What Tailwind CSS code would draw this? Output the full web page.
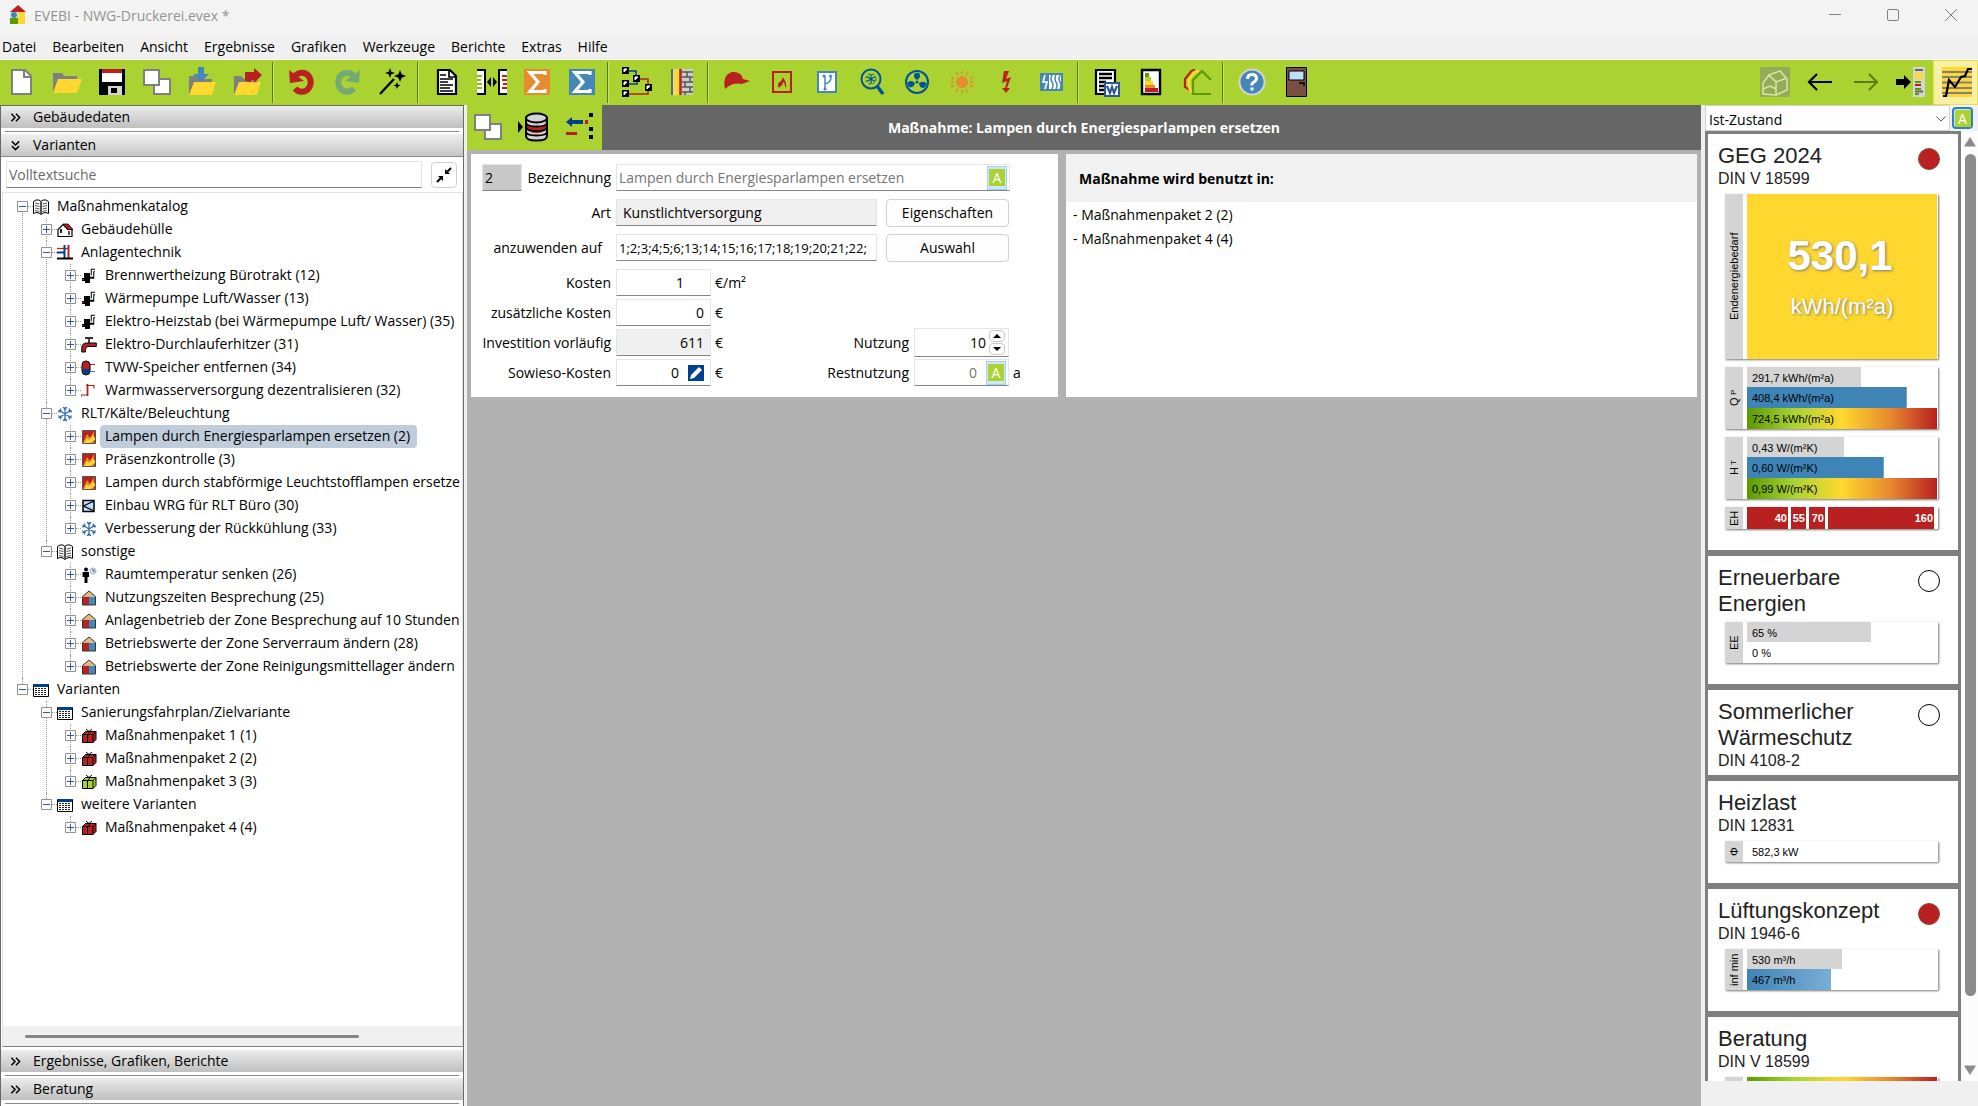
<!DOCTYPE html>
<html lang="de">

<head>
    <meta charset="UTF-8" />
    <meta name="viewport" content="width=device-width, initial-scale=1.0" />
    <title>EVEBI - NWG-Druckerei.evex</title>
    <script src="https://cdn.jsdelivr.net/npm/@tailwindcss/browser@4"></script>
</head>

<body class="h-screen flex flex-col overflow-hidden bg-[#f0f0f0] text-black text-[14px] leading-5 font-['Open_Sans','Noto_Sans',sans-serif]">

    <!-- icon definitions -->
    <svg class="hidden">
        <symbol id="i-copy" viewBox="0 0 30 30">
            <path d="M12 12h16v15H12z" fill="#fff" stroke="#808080" stroke-width="2" />
            <path d="M2 3h15v15H2z" fill="#fff" stroke="#808080" stroke-width="2" />
        </symbol>
        <symbol id="i-folder" viewBox="0 0 30 30">
            <path d="M1 26V6h9l2 3h13v7H6z" fill="#808080" />
            <path d="M6 12h24l-5 14H1z" fill="#ffd82f" />
        </symbol>
        <symbol id="i-book" viewBox="0 0 16 16">
            <path d="M.5 14.500V2.500L3 1l3 0 2 1.500L10 1l3 0 2.500 1.500v12L13 13.500l-3 .5-2 1.500L6 14l-3-.5z" fill="#fff" stroke="#000" />
            <path d="M2 4l4.500 1M2 6.500l4.500 1M2 9l4.500 1M2 11.500l4.500 1M14 4l-4.500 1M14 6.500l-4.500 1M14 9l-4.500 1M14 11.500l-4.500 1" stroke="#555" />
            <path d="M8 2v13" stroke="#555" stroke-width="2" />
        </symbol>
        <symbol id="i-house" viewBox="0 0 16 16">
            <path d="M1 14.500V7.500L6 2.500l5 5v7z" fill="#fff" stroke="#000" stroke-width="1.200" />
            <path d="M10 7.500h5v7h-5" fill="#fff" stroke="#000" stroke-width="1.200" />
            <path d="M6 2h5l5 5.500h-5z" fill="#b92020" stroke="#000" stroke-width=".8" />
            <path d="M3 7h2v4H3z" fill="#222" />
            <path d="M11 9h2v4h-2z" fill="#7a4a3a" />
        </symbol>
        <symbol id="i-tech" viewBox="0 0 16 16">
            <path d="M0 3.500h11" stroke="#b92020" stroke-width="1.300" />
            <path d="M0 7.500h8M7.500 0v14" stroke="#003f8c" stroke-width="2" />
            <path d="M11.500 0v14" stroke="#b92020" stroke-width="2" />
            <path d="M0 13.500h16" stroke="#000" stroke-width="2" />
        </symbol>
        <symbol id="i-boiler" viewBox="0 0 16 16">
            <path d="M3 5h6v10H4v-2H1v-3h2z" />
            <path d="M9 9h2.500V2.500H14" fill="none" stroke="#000" stroke-width="3.500" />
            <path d="M9 8h2.500V2.500H15" fill="none" stroke="#fff" stroke-width="1.500" />
            <path d="M1 11h2v1H1z" fill="#b92020" />
        </symbol>
        <symbol id="i-tap" viewBox="0 0 16 16">
            <path d="M4 1h8M8 1v5" stroke="#333" stroke-width="1.800" />
            <path d="M.8 15v-4q0-5 5-5h9.500v3.500H7q-2.500 0-2.500 3V15z" fill="#b92020" stroke="#000" />
        </symbol>
        <symbol id="i-tank" viewBox="0 0 16 16">
            <path d="M9 11.500h5" stroke="#4587b8" />
            <path d="M9 4.500h5" stroke="#b92020" />
            <rect x="1" y="1" width="8" height="14" rx="4" fill="#b92020" stroke="#000" />
            <path d="M1.500 9h7v2a3.500 3.500 0 0 1-7 0z" fill="#003f8c" />
        </symbol>
        <symbol id="i-pipe" viewBox="0 0 16 16">
            <path d="M0 14v-2h6M5 2.500h8v3" fill="none" stroke="#b92020" stroke-width="1.200" />
            <path d="M6.500 1v12" stroke="#b92020" stroke-width="1.800" />
        </symbol>
        <symbol id="i-snow" viewBox="0 0 16 16">
            <path d="M8 1v14M1.500 4l13 8M14.500 4l-13 8M6 1l2 2.500L10 1M6 15l2-2.500 2 2.500M1 6l3-.5L3.500 2.500M15 6l-3-.5.5-3M1 10l3 .5-.5 3M15 10l-3 .5.5 3" fill="none" stroke="#2c66ad" stroke-width="1.200" />
        </symbol>
        <symbol id="i-lamp" viewBox="0 0 16 16">
            <path d="M1.500 1.500h13v13h-13z" fill="#b92020" stroke="#555" />
            <path d="M2 14L6 5l3 4 4-7v12z" fill="#f0832b" />
            <path d="M3 14l3-5 2 2 4-5 2 3v2l-5 3z" fill="#ffd82f" />
        </symbol>
        <symbol id="i-wrg" viewBox="0 0 16 16">
            <path d="M2 2.500h11v11H2z" fill="#bfe0fb" stroke="#000" stroke-width="1.500" />
            <path d="M13 3L2.500 8 13 13" fill="none" stroke="#000" stroke-width="1.300" />
        </symbol>
        <symbol id="i-person" viewBox="0 0 16 16">
            <circle cx="5" cy="2.500" r="2" />
            <path d="M1.500 5h6.500v5H6.500v6h-3v-6h-2z" />
            <circle cx="12" cy="4" r="3" fill="#cfe4f5" stroke="#7796b0" stroke-dasharray="2 1" />
            <path d="M12 2v2h2" fill="none" stroke="#556" />
        </symbol>
        <symbol id="i-zone" viewBox="0 0 16 16">
            <path d="M1.500 6.500V15H8V6.500z" fill="#b92020" />
            <path d="M8 6.500V15h6.500V6.500z" fill="#4587b8" />
            <path d="M1.500 6.500L8 1l6.500 5.500z" fill="#e0bd78" />
            <path d="M1.500 6.500L8 1l6.500 5.500V15h-13z" fill="none" stroke="#333" />
        </symbol>
        <symbol id="i-table" viewBox="0 0 16 16">
            <path d="M.5 2.500h15v12H.5z" fill="#fff" stroke="#000" />
            <path d="M1 2h14v3H1z" fill="#003f8c" />
            <path d="M2 6.500h12M2 8.500h12M2 10.500h12M2 12.500h12" stroke="#222" stroke-dasharray="2 1" />
        </symbol>
        <symbol id="i-pack" viewBox="0 0 16 16">
            <path d="M1.500 6.500l3-3h10.500v8l-3 3H1.500z" fill="currentColor" stroke="#000" />
            <path d="M1.500 6.500H12v8M12 6.500l3-3M6.500 14.500v-8l3-3M5 1l3 2.500L11 1" fill="none" stroke="#000" />
        </symbol>
        <symbol id="i-plus" viewBox="0 0 11 11">
            <path d="M.5.5h10v10H.5z" fill="#fdfdfd" stroke="#919191" />
            <path d="M2 5.500h7M5.500 2v7" stroke="#3a5795" />
        </symbol>
        <symbol id="i-minus" viewBox="0 0 11 11">
            <path d="M.5.5h10v10H.5z" fill="#fdfdfd" stroke="#919191" />
            <path d="M2 5.500h7" stroke="#3a5795" />
        </symbol>
        <symbol id="i-chev" viewBox="0 0 12 12">
            <path d="M1.500 2l4 4-4 4M6.500 2l4 4-4 4" fill="none" stroke="#000" stroke-width="1.600" />
        </symbol>
    </svg>

    <!-- title bar -->
    <header class="h-[34px] shrink-0 flex items-center bg-[#f3f3f3] text-[#929292]">
        <svg class="w-[18px] h-5 ml-[9px] mb-1" viewBox="0 0 18 20">
            <path d="M1 7L9 0l8 7z" fill="#b92020" />
            <path d="M1 7h8v6H1z" fill="#d3e6f5" />
            <circle cx="5" cy="10" r="3" fill="#4587b8" />
            <path d="M1 13h8v6H1z" fill="#5b9a00" />
            <path d="M9 7h7v12H9z" fill="#ffd82f" />
        </svg>
        <h1 class="ml-[7px] mb-[3px]">EVEBI - NWG-Druckerei.evex *</h1>
        <div class="ml-auto mb-1 flex">
            <button class="w-[58px] h-[30px] flex items-center justify-center" aria-label="Minimieren"><svg class="size-3" viewBox="0 0 12 12"><path d="M0 5.500h12" stroke="#808080" /></svg></button>
            <button class="w-[58px] h-[30px] flex items-center justify-center" aria-label="Maximieren"><svg class="size-3" viewBox="0 0 12 12"><rect x=".5" y=".5" width="11" height="11" rx="1.500" fill="none" stroke="#808080" /></svg></button>
            <button class="w-[58px] h-[30px] flex items-center justify-center mr-[-2px]" aria-label="Schließen"><svg class="size-3" viewBox="0 0 12 12"><path d="M0 0l12 12M12 0L0 12" stroke="#808080" /></svg></button>
        </div>
    </header>

    <!-- menu -->
    <nav class="h-[26px] shrink-0 flex items-center gap-4 pl-[2px] border-b border-white">
        <button>Datei</button>
        <button>Bearbeiten</button>
        <button>Ansicht</button>
        <button>Ergebnisse</button>
        <button>Grafiken</button>
        <button>Werkzeuge</button>
        <button>Berichte</button>
        <button>Extras</button>
        <button>Hilfe</button>
    </nav>

    <!-- toolbar -->
    <div class="h-[45px] shrink-0 flex items-center bg-[#aad332] [&>button]:w-[45px] [&>button]:h-full [&>button]:flex [&>button]:items-center [&>button]:justify-center [&>button]:pr-px [&>button]:pb-px [&_svg]:size-[30px] [&>hr]:w-[2px] [&>hr]:h-[41px] [&>hr]:ml-[2px] [&>hr]:mr-[6px] [&>hr]:border-0 [&>hr]:border-l [&>hr]:border-[#5d7a10] [&>hr]:bg-[#c6e36b]">
        <button aria-label="Neu"><svg viewBox="0 0 30 30"><path d="M5 3h13l6 6v18H5z" fill="#fff" stroke="#808080" stroke-width="2" /><path d="M17 3v7h7" fill="none" stroke="#808080" stroke-width="2" /></svg></button>
        <button aria-label="Öffnen"><svg><use href="#i-folder" /></svg></button>
        <button aria-label="Speichern"><svg viewBox="0 0 30 30"><path d="M2 2h26v26H2z" /><path d="M5 2h20v4H5z" fill="#b92020" /><path d="M5 6h20v9H5z" fill="#fff" /><path d="M11 19h14v9H11z" fill="#d4d4d4" /><path d="M14 21h6v5h-6z" /></svg></button>
        <button aria-label="Kopieren"><svg><use href="#i-copy" /></svg></button>
        <button aria-label="Importieren"><svg viewBox="0 0 30 30"><path d="M2 28V9h7l3 3h13v6z" fill="#808080" /><path d="M7 15h22l-4 13H2z" fill="#ffd82f" /><path d="M11 0h6v7h5l-8 8-8-8h5z" fill="#4587b8" /></svg></button>
        <button aria-label="Exportieren"><svg viewBox="0 0 30 30"><path d="M2 28V9h7l3 3h13v6z" fill="#808080" /><path d="M7 15h22l-4 13H2z" fill="#ffd82f" /><path d="M13 14V5h9V1l8 7-8 8v-3h-3v2z" fill="#b92020" /></svg></button>
        <hr>
        <button aria-label="Rückgängig"><svg viewBox="0 0 30 30"><path d="M8 9q4-4 9-3a9 9.500 0 1 1-9 15.500" fill="none" stroke="#b92020" stroke-width="6" /><path d="M2 3l1 13 14-2z" fill="#b92020" /></svg></button>
        <button aria-label="Wiederholen"><svg viewBox="0 0 30 30"><path d="M22 9q-4-4-9-3a9 9.500 0 1 0 9 15.500" fill="none" stroke="#74ab72" stroke-width="6" /><path d="M28 3l-1 13-14-2z" fill="#74ab72" /></svg></button>
        <button aria-label="Assistent"><svg viewBox="0 0 30 30"><path d="M3 27L17 12" stroke="#000" stroke-width="2.400" /><path d="M13 1l1.300 3.700L18 6l-3.700 1.300L13 11l-1.300-3.700L8 6l3.700-1.300zM23 3l1.700 4.300L29 9l-4.300 1.700L23 15l-1.700-4.300L17 9l4.300-1.700zM20 15l1 2.500 2.500 1-2.500 1-1 2.500-1-2.500-2.500-1 2.500-1z" /></svg></button>
        <hr>
        <button aria-label="Bericht"><svg viewBox="0 0 30 30"><path d="M6 3h12l6 6v18H6z" fill="#fff" stroke="#000" stroke-width="2.200" /><path d="M17 3v7h7M8 8h6M8 12h13M8 15h8M8 18h13M8 21h10M8 24h13" fill="none" stroke="#000" stroke-width="1.700" /></svg></button>
        <button aria-label="Vergleichen"><svg viewBox="0 0 30 30"><path d="M0 2h9v26H0M30 2h-9v26h9" fill="#fff" /><path d="M0 3h8v24H0M30 3h-8v24h8" fill="none" stroke="#000" stroke-width="2" /><path d="M0 9h5M0 13h4M0 17h5M0 21h5" stroke="#8cba20" stroke-width="2" /><path d="M25 9h5M25 13h5M26 17h4M25 21h5" stroke="#b92020" stroke-width="2" /><path d="M14 10v10l-4-5zM16 10v10l4-5z" /></svg></button>
        <button aria-label="Summe"><svg viewBox="0 0 30 30"><path d="M2 2h26v26H2z" fill="#e88a2e" /><path d="M23 8V5.500H8L16 15 8 24.500h15V22" fill="none" stroke="#fff" stroke-width="3.200" /></svg></button>
        <button aria-label="Gesamtsumme"><svg viewBox="0 0 30 30"><path d="M2 2h26v26H2z" fill="#4587b8" /><path d="M23 8V5.500H8L16 15 8 24.500h15V22" fill="none" stroke="#fff" stroke-width="3.200" /></svg></button>
        <hr>
        <button aria-label="Struktur"><svg viewBox="0 0 30 30"><path d="M5 4h9v7M5 17h10v-5" fill="none" stroke="#003f8c" stroke-width="1.500" /><path d="M17 12h9v8M5 27h21v-8" fill="none" stroke="#b92020" stroke-width="1.500" /><path d="M0 0h7v7H0zM11 8h7v7h-7zM0 13h7v7H0zM23 17h7v7h-7zM0 23h7v7H0z" /><path d="M2 2h3L2 5zM13 10h3l-3 3zM2 15h3l-3 3zM25 19h3l-3 3zM2 25h3l-3 3z" fill="#fff" stroke="#fff" /></svg></button>
        <button aria-label="Bauteile"><svg viewBox="0 0 30 30"><path d="M4 2h22v26H4z" fill="#ccc" /><path d="M5 2v26" stroke="#666" stroke-width="2" /><path d="M6 2h7v26H6z" fill="#d8dfa0" /><path d="M7 4q7 0 4 2t-4 2q7 0 4 2t-4 2q7 0 4 2t-4 2q7 0 4 2t-4 2q7 0 4 2t-4 2q7 0 4 2t-4 2" fill="none" stroke="#ffd82f" stroke-width="2.500" /><path d="M13.500 2v26" stroke="#b92020" stroke-width="2.500" /><path d="M15 5h11M15 10h11M15 15h11M15 20h11M15 25h11M20 5v5M23 10v5M18 15v5M23 20v5M18 25v3" stroke="#555" stroke-width="1.500" /></svg></button>
        <hr>
        <button aria-label="Energieberater"><svg viewBox="0 0 30 30"><path d="M3 22Q0 8 10 5q9-1 11 7l7 2-8 3q-9-2-17 5z" fill="#b92020" /></svg></button>
        <button aria-label="Heizung"><svg viewBox="0 0 30 30"><path d="M6 5h18v20H6z" fill="none" stroke="#b92020" stroke-width="2" /><path d="M12 21q-3-4 2-7 2-2 1-4 5 4 4 11l-1-2q0-3-2-4 0 3-2 4-2 1-2 2z" fill="#b92020" /></svg></button>
        <button aria-label="Trinkwasser"><svg viewBox="0 0 30 30"><path d="M6 5h18v20H6z" fill="#fff" stroke="#4587b8" stroke-width="2" /><path d="M13 9v12M13 17q6-1 6-7" fill="none" stroke="#4587b8" stroke-width="1.500" /><circle cx="12" cy="9" r="1.500" fill="#4587b8" /><circle cx="18.500" cy="9" r="1.500" fill="#4587b8" /><circle cx="13" cy="22" r="1.500" fill="#4587b8" /></svg></button>
        <button aria-label="Kühlung"><svg viewBox="0 0 30 30"><circle cx="14" cy="12" r="9.500" fill="none" stroke="#00539c" stroke-width="2" /><path d="M20 19l6 8" stroke="#00539c" stroke-width="3.500" /><path d="M14 7v10M10 9.500l8 5M18 9.500l-8 5" fill="none" stroke="#00539c" stroke-width="1.200" /><circle cx="14" cy="12" r="5" fill="none" stroke="#00539c" stroke-dasharray="2 2" /></svg></button>
        <button aria-label="Lüftung"><svg viewBox="0 0 30 30"><circle cx="15" cy="15" r="11" fill="none" stroke="#00539c" stroke-width="2" /><path d="M15 13q-5-3-2-7h4q3 4-2 7zM13 16q-1 5-6 4l-2-4q4-4 8 0zM17 16q5-3 8 1l-3 4q-5 0-5-5z" fill="#00539c" /><circle cx="15" cy="15" r="1.500" fill="#00539c" /></svg></button>
        <button aria-label="Solar"><svg viewBox="0 0 30 30"><circle cx="15" cy="15" r="6" fill="#e88a2e" /><path d="M15 4v3M15 23v3M4 15h3M23 15h3M9 5l2 3M21 5l-2 3M9 25l2-3M21 25l-2-3M4 10l3 2M26 10l-3 2M4 20l3-2M26 20l-3-2" stroke="#e88a2e" stroke-width="1.600" /></svg></button>
        <button aria-label="Strom"><svg viewBox="0 0 30 30"><path d="M12 4h5l-3 8 5-2-4 11h3l-4 5-4-5h3l2-7-5 2z" fill="#b92020" /></svg></button>
        <button aria-label="Heizkörper"><svg viewBox="0 0 30 30"><path d="M3 6h23v18H3z" fill="#4587b8" /><path d="M12 8h12v14H12z" fill="#fff" /><path d="M15 8q-2 4 0 7t0 7M19 8q-2 4 0 7t0 7M23 8q-2 4 0 7t0 7" fill="none" stroke="#4587b8" stroke-width="1.500" /><path d="M8 8l-2 7h4l-2 7" fill="none" stroke="#fff" stroke-width="1.700" /></svg></button>
        <hr>
        <button aria-label="Word-Bericht"><svg viewBox="0 0 30 30"><path d="M4 3h19v24H4z" fill="#fff" stroke="#000" stroke-width="2.200" /><path d="M7 7h13M7 11h13M7 15h7M7 19h5M7 23h5" stroke="#000" stroke-width="2.400" /><path d="M13 16h14v13H13z" fill="#fff" stroke="#2b579a" stroke-width="2" /><path d="M15 19l3 7 2-6 2 6 3-7" fill="none" stroke="#2b579a" stroke-width="2.200" /></svg></button>
        <button aria-label="Energieausweis"><svg viewBox="0 0 30 30"><path d="M5 3h18v24H5z" fill="#fff" stroke="#000" stroke-width="2.400" /><path d="M8 6h4v4H8z" fill="#5b9a00" /><path d="M8 10h6v4H8z" fill="#aad332" /><path d="M8 14h8v4H8z" fill="#ffd82f" /><path d="M8 18h10v3H8z" fill="#e88a2e" /><path d="M8 21h13v4H8z" fill="#b92020" /></svg></button>
        <button aria-label="Sanierungsfahrplan"><svg viewBox="0 0 30 30"><path d="M13 3q-4 0-5 3l-5 6v8l5 3" fill="none" stroke="#b92020" stroke-width="2.200" /><path d="M17 4q-4 0-6 3L7 13v7l2 5" fill="none" stroke="#ffd82f" stroke-width="2.500" /><path d="M29 13l-9-9-9 9v14h18" fill="none" stroke="#5b9a00" stroke-width="2.200" /></svg></button>
        <hr>
        <button aria-label="Hilfe"><svg viewBox="0 0 30 30"><circle cx="15" cy="15" r="12.500" fill="#4587b8" stroke="#d4d4d4" stroke-width="2" /><path d="M10.500 12q0-4.500 4.500-4.500t4.500 4q0 2-2.500 3.500t-2 3.500" fill="none" stroke="#fff" stroke-width="3" /><path d="M13.500 20.500h3v3h-3z" fill="#fff" /></svg></button>
        <button aria-label="Beenden"><svg viewBox="0 0 30 30"><path d="M4.500.5h20v29h-20z" fill="#79503f" stroke="#000" /><path d="M7 4h15v9H7z" fill="#bfe0fb" stroke="#000" /><path d="M17 16h5v3" fill="none" stroke="#000" stroke-width="1.500" /></svg></button>

        <button class="ml-auto" aria-label="3D-Ansicht"><svg viewBox="0 0 30 30"><path d="M0 0h30v30H0z" fill="#94ab58" /><path d="M3 27V16l6-8 7 7v13zM9 8l11-4 7 8v11l-11 5M16 15l11-4M3 22l7-3 6 3" fill="none" stroke="#d7e7a4" stroke-width="1.500" /></svg></button>
        <button aria-label="Zurück"><svg viewBox="0 0 30 30"><path d="M27 15H4M12 7l-8 8 8 8" fill="none" stroke="#000" stroke-width="2.200" /></svg></button>
        <button aria-label="Vor"><svg viewBox="0 0 30 30"><path d="M4 15h23M19 7l8 8-8 8" fill="none" stroke="#5d7a10" stroke-width="2" /></svg></button>
        <button aria-label="Seitenleiste"><svg viewBox="0 0 30 30"><path d="M1 12h8V8l7 7-7 7v-4H1z" /><path d="M18 0h12v30H18z" fill="#d4d4d4" /><path d="M20 2h8v2h-8z" fill="#666" /><path d="M20 6h8v6h-8z" fill="#ffd82f" /><path d="M20 15h6M20 22h6M20 27h4" stroke="#5b9a00" stroke-width="2" /><path d="M20 18h6" stroke="#b92020" stroke-width="2" /><path d="M20 24.500h8" stroke="#666" stroke-width="2" /></svg></button>
        <button class="pl-[3px] bg-[#f8f0a4] border border-[#f3dd3e]" aria-label="Diagramm"><svg viewBox="0 0 30 30"><path d="M0 0h30v30H0z" fill="#ffd82f" /><path d="M0 5h30M0 10h30M0 15.500h30M0 21h30M0 26h30" stroke="#808080" stroke-width="2" /><path d="M1 29h3L7 13l6 7 6-10 4-1 3-7h4" fill="none" stroke="#000" stroke-width="2.200" /></svg></button>
    </div>

    <main class="flex-1 min-h-0 flex">

        <!-- navigation -->
        <aside class="w-[464px] shrink-0 flex flex-col bg-white border-l border-t border-r border-[#6a6a6a]">
            <button class="h-[22px] flex items-center gap-3 pl-[9px] bg-linear-to-b from-[#ececec] to-[#bfbfbf]"><svg class="size-[11px]"><use href="#i-chev" /></svg>Gebäudedaten</button>
            <hr class="mx-1 my-[3px] border-[#8c8c8c]">
            <button class="h-[23px] flex items-center gap-3 pl-[9px] mt-[-1px] border-b border-[#8c8c8c] bg-linear-to-b from-[#f0f0f0] to-[#c6c6c6]"><svg class="size-[11px] rotate-90"><use href="#i-chev" /></svg>Varianten</button>
            <div class="flex items-center gap-[9px] h-[35px] pl-[5px] pr-[6px]">
                <input type="text" aria-label="Volltextsuche" placeholder="Volltextsuche" class="flex-1 h-[27px] pl-[2px] border border-[#e2e2e2] border-b-[#808080] placeholder:text-[#6a6a6a]">
                <button class="w-[26px] h-[26px] rounded border border-[#d0d0d0] flex items-center justify-center" aria-label="Einklappen"><svg class="size-4" viewBox="0 0 16 16"><path d="M1 15l4-4M15 1l-4 4" stroke="#000" stroke-width="2" /><path d="M2 9h5v5zM9 2l5 5H9z" /></svg></button>
            </div>
            <div class="flex-1 min-h-0 flex flex-col border border-[#e2e2e2] border-b-[#808080] ml-px">
                <ul class="flex-1 min-h-0 overflow-hidden whitespace-nowrap pl-[14px] pt-[2px] mr-[2px] [&_ul]:pl-6 [&_li]:relative [&_li]:before:absolute [&_li]:before:left-[5px] [&_li]:before:top-0 [&_li]:before:bottom-0 [&_li]:before:border-l [&_li]:before:border-dotted [&_li]:before:border-[#999] [&_li:last-child]:before:bottom-auto [&_li:last-child]:before:h-3 [&_p]:relative [&_p]:h-[23px] [&_p]:flex [&_p]:items-center [&_svg]:shrink-0 [&_p>svg:first-child]:size-[11px] [&_p>svg:last-of-type]:size-4 [&_i]:shrink-0 [&_i]:w-[5px] [&_i]:border-t [&_i]:border-dotted [&_i]:border-[#999] [&_span]:pl-[5px] [&_span]:ml-[3px] [&_span]:pr-[7px] [&_span]:h-[23px] [&_span]:leading-[22px] [&_span]:rounded">
                    <li class="before:mt-3">
                        <p><svg><use href="#i-minus" /></svg><i></i><svg><use href="#i-book" /></svg><span>Maßnahmenkatalog</span></p>
                        <ul>
                            <li>
                                <p><svg><use href="#i-plus" /></svg><i></i><svg><use href="#i-house" /></svg><span>Gebäudehülle</span></p>
                            </li>
                            <li>
                                <p><svg><use href="#i-minus" /></svg><i></i><svg><use href="#i-tech" /></svg><span>Anlagentechnik</span></p>
                                <ul>
                                    <li><p><svg><use href="#i-plus" /></svg><i></i><svg><use href="#i-boiler" /></svg><span>Brennwertheizung Bürotrakt (12)</span></p></li>
                                    <li><p><svg><use href="#i-plus" /></svg><i></i><svg><use href="#i-boiler" /></svg><span>Wärmepumpe Luft/Wasser (13)</span></p></li>
                                    <li><p><svg><use href="#i-plus" /></svg><i></i><svg><use href="#i-boiler" /></svg><span>Elektro-Heizstab (bei Wärmepumpe Luft/ Wasser) (35)</span></p></li>
                                    <li><p><svg><use href="#i-plus" /></svg><i></i><svg><use href="#i-tap" /></svg><span>Elektro-Durchlauferhitzer (31)</span></p></li>
                                    <li><p><svg><use href="#i-plus" /></svg><i></i><svg><use href="#i-tank" /></svg><span>TWW-Speicher entfernen (34)</span></p></li>
                                    <li><p><svg><use href="#i-plus" /></svg><i></i><svg><use href="#i-pipe" /></svg><span>Warmwasserversorgung dezentralisieren (32)</span></p></li>
                                </ul>
                            </li>
                            <li>
                                <p><svg><use href="#i-minus" /></svg><i></i><svg><use href="#i-snow" /></svg><span>RLT/Kälte/Beleuchtung</span></p>
                                <ul>
                                    <li><p><svg><use href="#i-plus" /></svg><i></i><svg><use href="#i-lamp" /></svg><span class="bg-[#bfcddb]">Lampen durch Energiesparlampen ersetzen (2)</span></p></li>
                                    <li><p><svg><use href="#i-plus" /></svg><i></i><svg><use href="#i-lamp" /></svg><span>Präsenzkontrolle (3)</span></p></li>
                                    <li><p><svg><use href="#i-plus" /></svg><i></i><svg><use href="#i-lamp" /></svg><span>Lampen durch stabförmige Leuchtstofflampen ersetze</span></p></li>
                                    <li><p><svg><use href="#i-plus" /></svg><i></i><svg><use href="#i-wrg" /></svg><span>Einbau WRG für RLT Büro (30)</span></p></li>
                                    <li><p><svg><use href="#i-plus" /></svg><i></i><svg><use href="#i-snow" /></svg><span>Verbesserung der Rückkühlung (33)</span></p></li>
                                </ul>
                            </li>
                            <li>
                                <p><svg><use href="#i-minus" /></svg><i></i><svg><use href="#i-book" /></svg><span>sonstige</span></p>
                                <ul>
                                    <li><p><svg><use href="#i-plus" /></svg><i></i><svg><use href="#i-person" /></svg><span>Raumtemperatur senken (26)</span></p></li>
                                    <li><p><svg><use href="#i-plus" /></svg><i></i><svg><use href="#i-zone" /></svg><span>Nutzungszeiten Besprechung (25)</span></p></li>
                                    <li><p><svg><use href="#i-plus" /></svg><i></i><svg><use href="#i-zone" /></svg><span>Anlagenbetrieb der Zone Besprechung auf 10 Stunden</span></p></li>
                                    <li><p><svg><use href="#i-plus" /></svg><i></i><svg><use href="#i-zone" /></svg><span>Betriebswerte der Zone Serverraum ändern (28)</span></p></li>
                                    <li><p><svg><use href="#i-plus" /></svg><i></i><svg><use href="#i-zone" /></svg><span>Betriebswerte der Zone Reinigungsmittellager ändern</span></p></li>
                                </ul>
                            </li>
                        </ul>
                    </li>
                    <li>
                        <p><svg><use href="#i-minus" /></svg><i></i><svg><use href="#i-table" /></svg><span>Varianten</span></p>
                        <ul>
                            <li>
                                <p><svg><use href="#i-minus" /></svg><i></i><svg><use href="#i-table" /></svg><span>Sanierungsfahrplan/Zielvariante</span></p>
                                <ul>
                                    <li><p><svg><use href="#i-plus" /></svg><i></i><svg class="text-[#b92020]"><use href="#i-pack" /></svg><span>Maßnahmenpaket 1 (1)</span></p></li>
                                    <li><p><svg><use href="#i-plus" /></svg><i></i><svg class="text-[#b92020]"><use href="#i-pack" /></svg><span>Maßnahmenpaket 2 (2)</span></p></li>
                                    <li><p><svg><use href="#i-plus" /></svg><i></i><svg class="text-[#aad332]"><use href="#i-pack" /></svg><span>Maßnahmenpaket 3 (3)</span></p></li>
                                </ul>
                            </li>
                            <li>
                                <p><svg><use href="#i-minus" /></svg><i></i><svg><use href="#i-table" /></svg><span>weitere Varianten</span></p>
                                <ul>
                                    <li><p><svg><use href="#i-plus" /></svg><i></i><svg class="text-[#b92020]"><use href="#i-pack" /></svg><span>Maßnahmenpaket 4 (4)</span></p></li>
                                </ul>
                            </li>
                        </ul>
                    </li>
                </ul>
                <div class="h-5 shrink-0 flex items-center px-[22px] bg-[#f0f0f0]">
                    <div class="w-[334px] h-[3px] rounded-full bg-[#868686]"></div>
                </div>
            </div>
            <button class="h-[22px] shrink-0 mt-[3px] flex items-center gap-3 pl-[9px] bg-linear-to-b from-[#ececec] to-[#bfbfbf]"><svg class="size-[11px]"><use href="#i-chev" /></svg>Ergebnisse, Grafiken, Berichte</button>
            <hr class="mx-1 mt-[3px] mb-[2px] border-[#8c8c8c]">
            <button class="h-[22px] shrink-0 flex items-center gap-3 pl-[9px] bg-linear-to-b from-[#ececec] to-[#bfbfbf]"><svg class="size-[11px]"><use href="#i-chev" /></svg>Beratung</button>
            <hr class="mx-1 mt-[3px] mb-[2px] border-[#8c8c8c]">
        </aside>

        <!-- work area -->
        <section class="flex-1 min-w-0 ml-[3px] bg-[#b1b1b1]">
            <div class="h-[45px] flex bg-[#666]">
                <div class="flex bg-[#aad332] [&>button]:w-[45px] [&>button]:flex [&>button]:items-center [&>button]:justify-center [&>button]:pr-[4px] [&>button]:pb-px [&_svg]:size-[30px]">
                    <button aria-label="Kopieren"><svg><use href="#i-copy" /></svg></button>
                    <button aria-label="In Datenbank"><svg viewBox="0 0 30 30"><path d="M0 9v12l5-6z" /><path d="M8 6v18q0 4.500 10.500 4.500T29 24V6z" fill="#d4d4d4" stroke="#000" stroke-width="2" /><path d="M9 11q2 4 9.500 4t9.500-4v6q-2 4-9.500 4T9 17z" fill="#b92020" /><path d="M8 10.500q0 4 10.500 4t10.500-4M8 15q0 4 10.500 4T29 15M8 19.500q0 4 10.500 4t10.500-4" fill="none" stroke="#000" stroke-width="1.800" /><ellipse cx="18.500" cy="6" rx="10.500" ry="4.500" fill="#d4d4d4" stroke="#000" stroke-width="2" /></svg></button>
                    <button aria-label="Ersetzen"><svg viewBox="0 0 30 30"><path d="M3 10l6-5v3h11v4H9v3z" fill="#003f8c" /><path d="M22 8h3v4h-3zM3 20h11v3H3z" fill="#b92020" /><path d="M26 1h4v4h-4zM26 15h4v4h-4zM26 23h4v4h-4z" /></svg></button>
                </div>
                <h2 class="flex-1 -ml-[135px] self-center text-center text-white font-bold pointer-events-none">Maßnahme: Lampen durch Energiesparlampen ersetzen</h2>
            </div>

            <div class="flex gap-2 p-1 pb-0">
                <form class="w-[587px] h-[243px] bg-white pt-[10px] pl-[11px] flex flex-col gap-2">
                    <div class="flex items-center gap-[5px]">
                        <input type="text" value="2" aria-label="Nummer" readonly class="w-10 h-[27px] pl-[2px] bg-[#c8c8c8] border border-[#e5e5e5] border-b-[#868686]">
                        <label for="bezeichnung" class="w-[84px] text-right">Bezeichnung</label>
                        <div class="w-[394px] h-[27px] flex items-center border border-[#e5e5e5] border-b-[#868686]">
                            <input id="bezeichnung" type="text" value="Lampen durch Energiesparlampen ersetzen" class="flex-1 min-w-0 pl-[2px] text-[#757575]">
                            <button type="button" class="w-5 h-6 mr-[2px] flex items-center justify-center border border-[#9fd0f5] bg-[#cce8ff]"><span class="w-4 h-[17px] bg-[#aad332] text-white leading-[17px]">A</span></button>
                        </div>
                    </div>
                    <div class="flex items-center">
                        <label for="art" class="w-[129px] mr-[5px] text-right">Art</label>
                        <input id="art" type="text" value="Kunstlichtversorgung" readonly class="w-[261px] h-[27px] pl-[6px] bg-[#f0f0f0] border border-[#e5e5e5] border-b-[#868686]">
                        <button type="button" class="w-[123px] h-7 -my-px ml-[9px] rounded border border-[#d0d0d0] bg-[#fdfdfd]">Eigenschaften</button>
                    </div>
                    <div class="flex items-center">
                        <label for="auswahl" class="w-[120px] mr-[14px] text-right">anzuwenden auf</label>
                        <input id="auswahl" type="text" value="1;2;3;4;5;6;13;14;15;16;17;18;19;20;21;22;" class="w-[261px] h-[27px] pl-[2px] text-[13px] border border-[#e5e5e5] border-b-[#868686]">
                        <button type="button" class="w-[123px] h-7 -my-px ml-[9px] rounded border border-[#d0d0d0] bg-[#fdfdfd]">Auswahl</button>
                    </div>
                    <div class="flex flex-col gap-[3px]">
                        <div class="flex items-center">
                            <label for="kosten" class="w-[129px] mr-[5px] text-right">Kosten</label>
                            <input id="kosten" type="text" value="1" class="w-[95px] h-[27px] pr-[26px] text-right border border-[#e5e5e5] border-b-[#868686]">
                            <span class="ml-1">€/m²</span>
                        </div>
                        <div class="flex items-center">
                            <label for="zusatz" class="w-[129px] mr-[5px] text-right">zusätzliche Kosten</label>
                            <input id="zusatz" type="text" value="0" class="w-[95px] h-[27px] pr-[6px] text-right border border-[#e5e5e5] border-b-[#868686]">
                            <span class="ml-1">€</span>
                        </div>
                        <div class="flex items-center">
                            <label for="investition" class="w-[129px] mr-[5px] text-right whitespace-nowrap">Investition vorläufig</label>
                            <input id="investition" type="text" value="611" readonly class="w-[95px] h-[27px] pr-[6px] text-right bg-[#f0f0f0] border border-[#e5e5e5] border-b-[#868686]">
                            <span class="ml-1">€</span>
                            <label for="nutzung" class="ml-auto mr-[5px]">Nutzung</label>
                            <div class="w-[95px] h-[29px] -my-px mr-[49px] flex items-center border border-[#e5e5e5] border-b-[#868686]">
                                <input id="nutzung" type="text" value="10" class="flex-1 min-w-0 pr-[3px] text-right">
                                <div class="w-4 mr-[3px] flex flex-col gap-px">
                                    <button type="button" aria-label="Mehr" class="h-3 flex items-center justify-center rounded border border-[#c8c8c8]"><svg class="w-2 h-1" viewBox="0 0 8 4"><path d="M0 4l4-4 4 4z" /></svg></button>
                                    <button type="button" aria-label="Weniger" class="h-3 flex items-center justify-center rounded border border-[#c8c8c8]"><svg class="w-2 h-1" viewBox="0 0 8 4"><path d="M0 0l4 4 4-4z" /></svg></button>
                                </div>
                            </div>
                        </div>
                        <div class="flex items-center">
                            <label for="sowieso" class="w-[129px] mr-[5px] text-right">Sowieso-Kosten</label>
                            <div class="w-[95px] h-[27px] flex items-center border border-[#e5e5e5] border-b-[#868686]">
                                <input id="sowieso" type="text" value="0" class="flex-1 min-w-0 pr-[9px] text-right">
                                <button type="button" class="mr-[6px]" aria-label="Bearbeiten"><svg class="size-4" viewBox="0 0 16 16"><path d="M0 0h16v16H0z" fill="#003f8c" /><path d="M2 14l1-4 8-8 3 3-8 8z" fill="#fff" /></svg></button>
                            </div>
                            <span class="ml-1">€</span>
                            <label for="restnutzung" class="ml-auto mr-[5px]">Restnutzung</label>
                            <div class="w-[95px] h-[27px] flex items-center border border-[#e5e5e5] border-b-[#868686]">
                                <input id="restnutzung" type="text" value="0" class="flex-1 min-w-0 pr-[9px] text-right text-[#757575]">
                                <button type="button" class="w-5 h-6 mr-[2px] flex items-center justify-center border border-[#9fd0f5] bg-[#cce8ff]"><span class="w-4 h-[17px] bg-[#aad332] text-white leading-[17px]">A</span></button>
                            </div>
                            <span class="w-[45px] ml-1">a</span>
                        </div>
                    </div>
                </form>

                <div class="flex-1 bg-white">
                    <h3 class="h-12 pl-[13px] leading-[50px] font-bold bg-[#f1f1f1]">Maßnahme wird benutzt in:</h3>
                    <ul class="pt-px pl-[7px] leading-6">
                        <li>- Maßnahmenpaket 2 (2)</li>
                        <li>- Maßnahmenpaket 4 (4)</li>
                    </ul>
                </div>
            </div>
        </section>

        <!-- results -->
        <aside class="w-[277px] shrink-0 pl-1 pb-[25px] flex flex-col">
            <div class="h-[26px] shrink-0 flex items-center">
                <div class="relative w-[245px] h-full">
                    <select aria-label="Variante" class="appearance-none w-full h-full pl-[3px] pt-[3px] bg-[#fdfdfd] border border-[#d0d0d0]">
                        <option>Ist-Zustand</option>
                    </select>
                    <svg class="absolute right-[4px] top-[11px] w-[10px] h-[6px] pointer-events-none" viewBox="0 0 10 6"><path d="M.5.5L5 5 9.500.5" fill="none" stroke="#555" /></svg>
                </div>
                <button class="w-[21px] h-[22px] ml-[2px] flex items-center justify-center rounded border-2 border-[#2f7fc4] bg-[#cce8ff]"><span class="w-4 h-[17px] bg-[#aad332] text-white leading-[17px]">A</span></button>
            </div>
            <div class="flex-1 min-h-0 flex">
                <div class="w-[256px] overflow-hidden flex flex-col gap-[6px] p-[3px] pb-0 bg-[#7f7f7f] text-[11px] font-['Liberation_Sans',Arial,sans-serif] [&>article]:shrink-0 [&>article]:bg-white [&>article]:pt-[9px] [&>article]:pl-[10px] [&>article]:pr-5 [&>article]:pb-[21px] [&>article]:flex [&>article]:flex-col [&>article]:gap-2 [&_header]:flex [&_header]:justify-between [&_header]:-mb-[3px] [&_header]:-mr-[2px] [&_h3]:text-[22px] [&_h3]:leading-[26px] [&_h3]:text-[#222] [&_p]:text-[16px] [&_p]:leading-5 [&_p]:text-[#222]">
                    <article>
                        <header>
                            <div><h3>GEG 2024</h3><p>DIN V 18599</p></div>
                            <span class="size-[22px] mt-[5px] rounded-full bg-[#b92020] border border-[#8a4a40]"></span>
                        </header>
                        <div class="ml-[7px] flex gap-1 shadow-[1px_1px_2px_#777]">
                            <div class="w-[18px] flex items-center justify-center bg-[#d4d4d4] [writing-mode:vertical-rl] rotate-180">Endenergiebedarf</div>
                            <div class="flex-1 h-[165px] flex flex-col items-center bg-[#ffd82f] text-white text-shadow-[1px_1px_3px_#777] mr-px">
                                <strong class="mt-[36px] mr-1 text-[42px] leading-[52px]">530,1</strong>
                                <span class="mt-3 text-[22px] leading-[26px]">kWh/(m²a)</span>
                            </div>
                        </div>
                        <div class="ml-[7px] flex gap-1 shadow-[1px_1px_2px_#777]">
                            <div class="w-[18px] flex items-center justify-center gap-[2px] bg-[#d4d4d4] [writing-mode:vertical-rl] rotate-180">Q<span class="text-[8px]">P</span></div>
                            <div class="flex-1 mr-px leading-[22px] [&>div]:pl-[5px]">
                                <div class="h-5 w-[60%] bg-[#d4d4d4]">291,7 kWh/(m²a)</div>
                                <div class="h-[21px] w-[84%] bg-[#3f84b6] border-r border-[#6ba5d0]">408,4 kWh/(m²a)</div>
                                <div class="h-[21px] bg-linear-[90deg,#5b9a00,#aad332_25%,#ffd82f_50%,#e88a2e_75%,#b92020]">724,5 kWh/(m²a)</div>
                            </div>
                        </div>
                        <div class="ml-[7px] flex gap-1 shadow-[1px_1px_2px_#777]">
                            <div class="w-[18px] flex items-center justify-center gap-[2px] bg-[#d4d4d4] [writing-mode:vertical-rl] rotate-180">H<span class="text-[8px]">T</span></div>
                            <div class="flex-1 mr-px leading-[22px] [&>div]:pl-[5px]">
                                <div class="h-5 w-[51%] bg-[#d4d4d4]">0,43 W/(m²K)</div>
                                <div class="h-[21px] w-[72%] bg-[#3f84b6] border-r border-[#6ba5d0]">0,60 W/(m²K)</div>
                                <div class="h-[21px] bg-linear-[90deg,#5b9a00,#aad332_25%,#ffd82f_50%,#e88a2e_75%,#b92020]">0,99 W/(m²K)</div>
                            </div>
                        </div>
                        <div class="ml-[7px] flex gap-1 shadow-[1px_1px_2px_#777]">
                            <div class="w-[18px] flex items-center justify-center bg-[#d4d4d4] [writing-mode:vertical-rl] rotate-180">EH</div>
                            <div class="flex-1 h-[22px] leading-[23px] mr-1 flex gap-[3px] text-right text-white font-bold [&>div]:bg-[#b92020] [&>div]:pr-px">
                                <div class="w-[41px]">40</div>
                                <div class="w-[15px]">55</div>
                                <div class="w-4">70</div>
                                <div class="flex-1">160</div>
                            </div>
                        </div>
                    </article>
                    <article>
                        <header>
                            <h3>Erneuerbare<br>Energien</h3>
                            <span class="size-[22px] mt-[5px] rounded-full border border-black"></span>
                        </header>
                        <div class="ml-[7px] flex gap-1 shadow-[1px_1px_2px_#777]">
                            <div class="w-[18px] flex items-center justify-center bg-[#d4d4d4] [writing-mode:vertical-rl] rotate-180">EE</div>
                            <div class="flex-1 mr-px leading-[22px] [&>div]:pl-[5px]">
                                <div class="h-5 w-[65%] bg-[#d4d4d4]">65 %</div>
                                <div class="h-[21px]">0 %</div>
                            </div>
                        </div>
                    </article>
                    <article class="pb-[7px]!">
                        <header>
                            <div><h3>Sommerlicher<br>Wärmeschutz</h3><p>DIN 4108-2</p></div>
                            <span class="size-[22px] mt-[5px] rounded-full border border-black"></span>
                        </header>
                    </article>
                    <article>
                        <header>
                            <div><h3>Heizlast</h3><p>DIN 12831</p></div>
                        </header>
                        <div class="ml-[7px] flex gap-1 shadow-[1px_1px_2px_#777]">
                            <div class="w-[18px] flex items-center justify-center bg-[#d4d4d4] [writing-mode:vertical-rl] rotate-180">Φ</div>
                            <div class="flex-1 h-[21px] leading-[22px] pl-[5px]">582,3 kW</div>
                        </div>
                    </article>
                    <article>
                        <header>
                            <div><h3>Lüftungskonzept</h3><p>DIN 1946-6</p></div>
                            <span class="size-[22px] mt-[5px] rounded-full bg-[#b92020] border border-[#8a4a40]"></span>
                        </header>
                        <div class="ml-[7px] flex gap-1 shadow-[1px_1px_2px_#777]">
                            <div class="w-[18px] flex items-center justify-center bg-[#d4d4d4] [writing-mode:vertical-rl] rotate-180">inf min</div>
                            <div class="flex-1 mr-px leading-[22px] [&>div]:pl-[5px]">
                                <div class="h-5 w-[50%] bg-[#d4d4d4]">530 m³/h</div>
                                <div class="h-[21px] w-[44%] bg-linear-to-r from-[#3f84b6] to-[#78aed6]">467 m³/h</div>
                            </div>
                        </div>
                    </article>
                    <article>
                        <header>
                            <div><h3>Beratung</h3><p>DIN V 18599</p></div>
                        </header>
                        <div class="ml-[7px] flex gap-1 shadow-[1px_1px_2px_#777]">
                            <div class="w-[18px] bg-[#d4d4d4]"></div>
                            <div class="flex-1 h-[21px] mr-px bg-linear-[90deg,#5b9a00,#aad332_25%,#ffd82f_50%,#e88a2e_75%,#b92020]"></div>
                        </div>
                    </article>
                </div>
                <div class="flex-1 flex flex-col items-center pt-[6px] pb-[6px] pl-px bg-[#fcfcfc]">
                    <svg class="w-3 h-[10px]" viewBox="0 0 12 10"><path d="M6 0l6 9.500H0z" fill="#8b8b8b" /></svg>
                    <div class="w-[11px] h-[842px] mt-[7px] rounded-full bg-[#8b8b8b]"></div>
                    <svg class="w-3 h-[10px] mt-auto" viewBox="0 0 12 10"><path d="M6 10l6-9.500H0z" fill="#8b8b8b" /></svg>
                </div>
            </div>
        </aside>
    </main>
</body>

</html>
